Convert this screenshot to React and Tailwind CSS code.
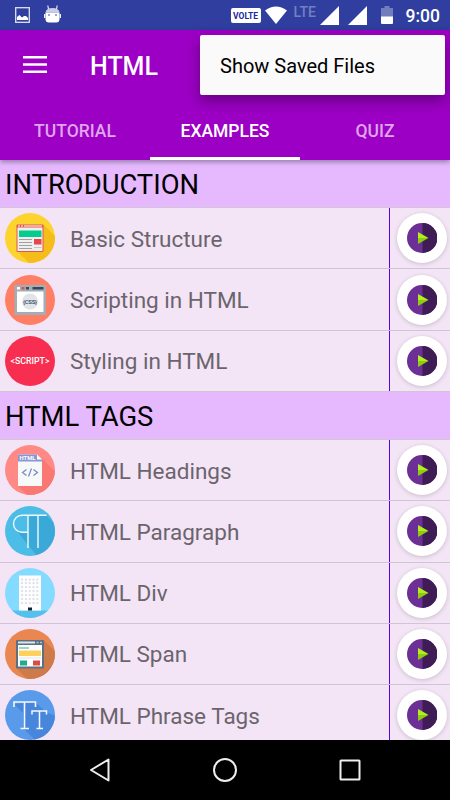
import { useState } from 'react';

const StructureIcon = () => (
  <svg viewBox="0 0 50 50" className="block w-[50px] h-[50px]">
    <defs>
      <clipPath id="structure-clip"><circle cx="25" cy="25" r="25" /></clipPath>
    </defs>
    <circle cx="25" cy="25" r="25" fill="#fdd32f" />
    <path d="M38.5 11.5 L60 33 V60 H34 L12.5 38.5 Z" fill="#f5bd1b" clipPath="url(#structure-clip)" />
    <rect x="11.5" y="11.5" width="27" height="27.5" rx="1" fill="#e2574c" />
    <rect x="12.5" y="14.5" width="25" height="23.5" fill="#efefef" />
    <path d="M13 13h2M16 13h2M19 13h18" stroke="#fff" strokeWidth="1.2" />
    <rect x="14" y="17.5" width="22.5" height="6.5" fill="#04cb8e" />
    <path d="M14 26.500h13M14 29.500h13M14 32.500h13M14 35.500h13" stroke="#a0a0a0" strokeWidth="1" />
    <rect x="29" y="26" width="7.5" height="5.5" fill="#e8444c" />
    <path d="M29 34.500h7.500" stroke="#c5c5c5" />
  </svg>
);

const CssIcon = () => (
  <svg viewBox="0 0 50 50" className="block w-[50px] h-[50px]">
    <circle cx="25" cy="25" r="25" fill="#ff7f66" />
    <rect x="9.5" y="10" width="31.5" height="30" fill="#a3adb5" />
    <rect x="12" y="16.5" width="26.5" height="20.5" fill="#fff" />
    <rect x="12" y="12" width="3" height="2.5" fill="#fff" />
    <rect x="16.5" y="12" width="3" height="2.5" fill="#e2553b" />
    <rect x="21" y="12" width="3" height="2.5" fill="#324a5e" />
    <rect x="27.5" y="12" width="11" height="2.5" fill="#324a5e" />
    <circle cx="25" cy="26.5" r="8" fill="#e1e5ea" />
    <text x="25" y="28.7" textAnchor="middle" textLength="14" fontFamily="Roboto, sans-serif" fontWeight="500" fontSize="6" fill="#324a5e">{'{CSS}'}</text>
  </svg>
);

const ScriptIcon = () => (
  <svg viewBox="0 0 50 50" className="block w-[50px] h-[50px]">
    <circle cx="25" cy="25" r="25" fill="#f72e50" />
    <text x="25" y="28" textAnchor="middle" textLength="39" lengthAdjust="spacingAndGlyphs" fontFamily="Roboto, sans-serif" fontWeight="500" fontSize="8.5" fill="#fff">{'<SCRIPT>'}</text>
  </svg>
);

const HeadingsIcon = () => (
  <svg viewBox="0 0 50 50" className="block w-[50px] h-[50px]">
    <defs>
      <clipPath id="headings-clip"><circle cx="25" cy="25" r="25" /></clipPath>
    </defs>
    <circle cx="25" cy="25" r="25" fill="#ff8a85" />
    <path d="M36.5 13 L60 36.5 V60 H32 L13 41 Z" fill="#f97873" clipPath="url(#headings-clip)" />
    <path d="M13 9.500h19l5 5V41H13z" fill="#f7f8f8" />
    <path d="M13 9.500h19l5 5v2H13z" fill="#8c96d6" />
    <path d="M32 9.500l5 5h-5z" fill="#fff" />
    <text x="22.5" y="15.3" textAnchor="middle" textLength="16" lengthAdjust="spacingAndGlyphs" fontFamily="Roboto, sans-serif" fontWeight="700" fontSize="6.2" fill="#fff">HTML</text>
    <path d="M21.500 24.500l-4 3 4 3M28.500 24.500l4 3-4 3M26.500 23.500l-3 8" fill="none" stroke="#7884cc" strokeWidth="1.2" />
  </svg>
);

const ParagraphIcon = () => (
  <svg viewBox="0 0 50 50" className="block w-[50px] h-[50px]">
    <defs>
      <clipPath id="paragraph-clip"><circle cx="25" cy="25" r="25" /></clipPath>
    </defs>
    <circle cx="25" cy="25" r="25" fill="#4bbde7" />
    <path d="M41 9 L60 28 V60 H40 L11 24 V12 Z" fill="#3ba9d8" clipPath="url(#paragraph-clip)" />
    <path d="M22.500 9.500H16a8 8 0 0 0 0 17h6.500z" fill="#4bbde7" />
    <path d="M41.500 9.300H17a8.500 8.500 0 0 0 0 17h5.700M23 9.300V42M33 9.300V42" fill="none" stroke="#f2fbff" strokeWidth="1.4" />
  </svg>
);

const floors = [11.5, 15, 19, 23, 27, 31, 35];
const windows = [16, 19.8, 23.6, 27.4, 31.2];

const DivIcon = () => (
  <svg viewBox="0 0 50 50" className="block w-[50px] h-[50px]">
    <defs>
      <clipPath id="div-clip"><circle cx="25" cy="25" r="25" /></clipPath>
    </defs>
    <circle cx="25" cy="25" r="25" fill="#84dbff" />
    <rect y="42.5" width="50" height="8" fill="#54c0eb" clipPath="url(#div-clip)" />
    <rect x="14" y="7.5" width="22" height="35" fill="#fff" />
    {floors.map((y) =>
      windows.map((x) => <rect key={`${x}-${y}`} x={x} y={y - 1} width="2.2" height="2.2" fill="#dfe4ea" />)
    )}
    <rect x="23" y="39.5" width="4" height="3" fill="#0d2435" />
  </svg>
);

const SpanIcon = () => (
  <svg viewBox="0 0 50 50" className="block w-[50px] h-[50px]">
    <defs>
      <clipPath id="span-clip"><circle cx="25" cy="25" r="25" /></clipPath>
    </defs>
    <circle cx="25" cy="25" r="25" fill="#ea8650" />
    <path d="M39 11.5 L60 32 V60 H32 L11 39 Z" fill="#ce7a4b" clipPath="url(#span-clip)" />
    <rect x="11" y="11" width="28" height="28.5" rx="1" fill="#5b7084" />
    <rect x="13" y="16" width="24" height="21.5" fill="#fff" />
    <path d="M13 13.500h17" stroke="#dfe5e9" strokeWidth="2" />
    <path d="M31.500 13.500h2M35 13.500h2" stroke="#b6c3cc" strokeWidth="1.5" />
    <path d="M14 19h10" stroke="#28b394" />
    <rect x="14" y="21.5" width="22" height="5.5" fill="#ffd05b" />
    <path d="M14 29h22" stroke="#e3e3df" strokeWidth="1" />
    <rect x="15" y="31.5" width="7" height="5" fill="#1cad90" />
    <rect x="28" y="31.5" width="7" height="5" fill="#dc4c40" />
  </svg>
);

const PhraseIcon = () => (
  <svg viewBox="0 0 50 50" className="block w-[50px] h-[50px]">
    <defs>
      <clipPath id="phrase-clip"><circle cx="25" cy="25" r="25" /></clipPath>
    </defs>
    <circle cx="25" cy="25" r="25" fill="#5a9aeb" />
    <path d="M9 14 L18 23 V38 L30 50 H60 V30 L41 22 L30 12 Z" fill="#4886db" clipPath="url(#phrase-clip)" />
    <path d="M9 17v-5h21.500v5M19.500 12v26.500M15.500 38.500h8.500" fill="none" stroke="#f4f9ff" strokeWidth="1.6" />
    <path d="M27 24.500v-3.500h14.500v3.500M34.500 21v17.500M31.500 38.500h6.500" fill="none" stroke="#f4f9ff" strokeWidth="1.5" />
  </svg>
);

const sections = [
  {
    title: 'INTRODUCTION',
    items: [
      { label: 'Basic Structure', Icon: StructureIcon },
      { label: 'Scripting in HTML', Icon: CssIcon },
      { label: 'Styling in HTML', Icon: ScriptIcon },
    ],
  },
  {
    title: 'HTML TAGS',
    items: [
      { label: 'HTML Headings', Icon: HeadingsIcon },
      { label: 'HTML Paragraph', Icon: ParagraphIcon },
      { label: 'HTML Div', Icon: DivIcon },
      { label: 'HTML Span', Icon: SpanIcon },
      { label: 'HTML Phrase Tags', Icon: PhraseIcon },
    ],
  },
];

const tabs = ['TUTORIAL', 'EXAMPLES', 'QUIZ'];

const StatusBar = () => (
  <div className="h-[30px] shrink-0 bg-[#303f9f] flex items-center justify-between pl-[15px] pr-[10px]">
    <div className="flex items-center gap-[14px]">
      <svg viewBox="0 0 15 16" className="w-[15px] h-4">
        <rect x="0.7" y="0.7" width="13.6" height="14.6" fill="none" stroke="#dfe2f1" strokeWidth="1.3" />
        <path d="M2 13V10l2.500-2 2.500 2.500 2-1.500 2 0 2 2v2z" fill="#fff" />
      </svg>
      <svg viewBox="0 0 17 18" className="w-[17px] h-[18px] -mt-[2px]">
        <path d="M4.500 4L3.800 0.500M12.500 4l.7-3.500" stroke="#e6e8f5" strokeWidth="1.2" />
        <path d="M1.500 7.500Q2 3 8.500 3t7 4.500z" fill="#c9cde6" />
        <path d="M1.500 7.500h14V14q0 3.500-3.500 3.500H5q-3.500 0-3.500-3.500z" fill="#fff" />
        <path d="M.7 9v4M16.300 9v4" stroke="#fff" strokeWidth="1.2" />
        <circle cx="5" cy="10" r="1" fill="#7f89c6" />
        <circle cx="12" cy="10" r="1" fill="#7f89c6" />
      </svg>
    </div>
    <div className="flex items-center">
      <div className="w-[30px] h-[15px] rounded-[2px] bg-white text-[#1a2a9c] text-[8.5px] font-bold leading-[16px] text-center">VOLTE</div>
      <svg viewBox="0 0 22 18" className="ml-1 w-[22px] h-[18px]">
        <path d="M0 4.500Q11-3.500 22 4.500L11 18z" fill="#fff" />
      </svg>
      <span className="ml-[7px] w-[23px] -mt-[6px] text-[14px] leading-4 font-medium text-[#747fc0]">LTE</span>
      <svg viewBox="0 0 19 19" className="ml-[3px] w-[19px] h-[19px]">
        <path d="M19 0v19H0z" fill="#fff" />
      </svg>
      <svg viewBox="0 0 19 19" className="ml-[9px] w-[19px] h-[19px]">
        <path d="M19 0v19H0z" fill="#fff" />
      </svg>
      <svg viewBox="0 0 12 18" className="ml-[14px] w-3 h-[18px]">
        <path d="M3.500 0h5v2H12v9H0V2h3.500z" fill="#727dbd" />
        <path d="M0 10.500h12V17q0 1-1 1H1q-1 0-1-1z" fill="#fff" />
      </svg>
      <span className="ml-[13px] mt-[2px] text-[17.5px] leading-5 font-medium text-white">9:00</span>
    </div>
  </div>
);

const PlayButton = () => (
  <button type="button" className="w-[50px] h-[50px] rounded-full bg-white shadow-[0_1px_4px_rgba(0,0,0,0.18)] flex items-center justify-center">
    <svg viewBox="0 0 30 30" className="w-[30px] h-[30px]">
      <circle cx="15" cy="15" r="15" fill="#6c2f96" />
      <path d="M15.500 0a15 15 0 0 1 0 30z" fill="#3f1c56" />
      <path d="M11 9v6h10.500z" fill="#b0f01c" />
      <path d="M11 21v-6h10.500z" fill="#8fcc10" />
    </svg>
  </button>
);

const Row = ({ label, Icon }) => (
  <div className="h-[61.25px] shrink-0 flex border-b border-[#d1c4d6]">
    <div className="flex-1 flex items-center pl-[5px]">
      <Icon />
      <span className="ml-[15px] pt-[1px] text-[22.5px] leading-7 text-[#6b646d]">{label}</span>
    </div>
    <div className="w-[61px] flex items-center pl-[7px] border-l border-[#5a00f5]">
      <PlayButton />
    </div>
  </div>
);

const App = () => {
  const [active, setActive] = useState('EXAMPLES');

  return (
    <div className="relative w-[450px] h-[800px] overflow-hidden flex flex-col bg-[#f3e5f5] font-['Roboto',sans-serif]">
      <StatusBar />

      {/* App bar */}
      <header className="relative z-10 h-[130px] shrink-0 bg-[#9c00c4] flex flex-col shadow-[0_2px_5px_rgba(0,0,0,0.35)]">
        <div className="h-[70px] flex items-center pl-[23px]">
          <svg viewBox="0 0 24 17" className="w-6 h-[17px] -mt-[1px]">
            <path d="M0 1.300h24M0 8.500h24M0 15.700h24" stroke="#fff" strokeWidth="2.6" />
          </svg>
          <h1 className="ml-[43px] mt-[4px] text-[25px] leading-8 font-medium text-white">HTML</h1>
        </div>
        <nav className="flex-1 grid grid-cols-3">
          {tabs.map((tab) => (
            <button
              key={tab}
              type="button"
              onClick={() => setActive(tab)}
              className={`border-b-[3px] pt-[5px] text-[17.5px] font-medium ${
                active === tab ? 'text-white border-white' : 'text-[#dfa6ec] border-transparent'
              }`}
            >
              {tab}
            </button>
          ))}
        </nav>
      </header>

      {/* Example list */}
      <main className="flex-1 min-h-0 overflow-hidden flex flex-col">
        {sections.map(({ title, items }) => (
          <section key={title} className="shrink-0">
            <h2 className="h-[48.125px] pl-[5px] bg-[#e6b9ff] border-b border-[#d1c4d6] text-[27.4px] leading-[50px] text-black">{title}</h2>
            {items.map((item) => (
              <Row key={item.label} {...item} />
            ))}
          </section>
        ))}
      </main>

      {/* Navigation bar */}
      <footer className="h-[60px] shrink-0 bg-black px-[37.5px] grid grid-cols-3 items-center justify-items-center">
        <svg viewBox="0 0 24 26" className="w-6 h-[26px]">
          <path d="M20.500 2.500v21L3 13z" fill="none" stroke="#eee" strokeWidth="2" strokeLinejoin="round" />
        </svg>
        <svg viewBox="0 0 24 24" className="w-6 h-6">
          <circle cx="12" cy="12" r="11" fill="none" stroke="#eee" strokeWidth="2" />
        </svg>
        <svg viewBox="0 0 22 22" className="w-[22px] h-[22px]">
          <rect x="1.5" y="1.5" width="19" height="19" rx="0.5" fill="none" stroke="#eee" strokeWidth="2" />
        </svg>
      </footer>

      {/* Overflow menu */}
      <div className="absolute z-20 top-[35px] left-[200px] w-[245px] h-[60px] rounded-[2px] bg-[#fafafa] flex items-center pl-5 shadow-[0_6px_14px_rgba(0,0,0,0.35)]">
        <span className="pt-[2px] text-[20px] leading-6 text-black">Show Saved Files</span>
      </div>
    </div>
  );
};

export default App;
